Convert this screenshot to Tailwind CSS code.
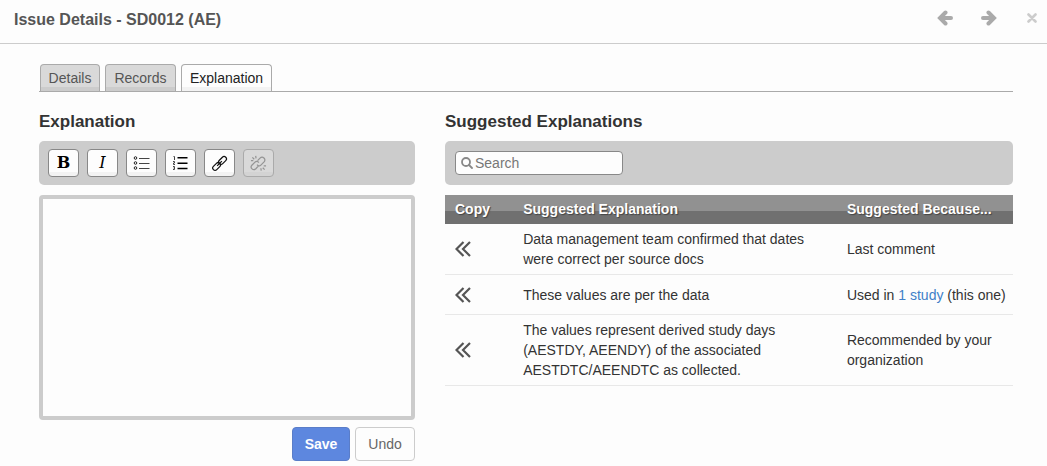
<!DOCTYPE html>
<html lang="en">
<head>
    <meta charset="UTF-8">
    <meta name="viewport" content="width=device-width, initial-scale=1.0">
    <title>Issue Details - SD0012 (AE)</title>
    <script src="https://cdn.jsdelivr.net/npm/@tailwindcss/browser@4"></script>
</head>
<body class="bg-[#fdfdfd] font-['Liberation_Sans',Arial,sans-serif] text-sm leading-5 text-[#333]">
    <!-- Header -->
    <header class="flex items-center justify-between border-b border-[#ccc] h-11 pl-[14px] pr-[10px] pb-1">
        <h1 class="text-base font-bold text-[#555]">Issue Details - SD0012 (AE)</h1>
        <div class="flex items-center pb-1">
            <button type="button" aria-label="Previous" class="mr-7">
                <svg class="block" width="16" height="16" viewBox="0 0 16 16" fill="none" stroke="#aaa" stroke-width="4" stroke-linecap="round"><path d="M8.500 2.500 3 8l5.500 5.500M4 8h10"/></svg>
            </button>
            <button type="button" aria-label="Next" class="mr-[30px]">
                <svg class="block" width="16" height="16" viewBox="0 0 16 16" fill="none" stroke="#aaa" stroke-width="4" stroke-linecap="round"><path d="M7.500 2.500 13 8l-5.500 5.500M12 8H2"/></svg>
            </button>
            <button type="button" aria-label="Close">
                <svg class="block" width="10" height="10" viewBox="0 0 10 10" fill="none" stroke="#ccc" stroke-width="2.600" stroke-linecap="round"><path d="M1.500 1.500l7 7M8.500 1.500l-7 7"/></svg>
            </button>
        </div>
    </header>

    <main class="pl-[39px] pr-[34px] pt-5 pb-1">
        <!-- Tabs -->
        <nav class="flex gap-[5px] border-b border-[#aaa] pl-px">
            <a href="#details" class="h-[27px] w-[60px] rounded-t border border-b-0 border-[#aaa] bg-linear-to-b from-[#d9d9d9] from-85% to-[#ccc] to-85% pt-[3px] text-center text-[#555]">Details</a>
            <a href="#records" class="h-[27px] w-[71px] rounded-t border border-b-0 border-[#aaa] bg-linear-to-b from-[#d9d9d9] from-85% to-[#ccc] to-85% pt-[3px] text-center text-[#555]">Records</a>
            <a href="#explanation" class="h-[27px] w-[91px] rounded-t border border-b-0 border-[#aaa] bg-linear-to-b from-[#fdfdfd] from-85% to-[#f3f3f3] to-85% pt-[3px] text-center text-[#222]">Explanation</a>
        </nav>

        <div class="grid grid-cols-[376fr_568fr] gap-[30px] pt-5">
            <!-- Explanation editor -->
            <section>
                <h2 class="mb-[9px] text-[17px] leading-5 font-bold"><label for="explanation-text">Explanation</label></h2>
                <div class="flex h-11 items-center gap-2 rounded-[5px] bg-[#ccc] pl-[9px]">
                    <button type="button" aria-label="Bold" class="h-7 w-[31px] rounded border border-[#888] bg-linear-to-b from-[#fdfdfd] from-85% to-[#f3f3f3] to-85% font-['DejaVu_Serif',serif] text-base font-bold text-black">B</button>
                    <button type="button" aria-label="Italic" class="h-7 w-[31px] rounded border border-[#888] bg-linear-to-b from-[#fdfdfd] from-85% to-[#f3f3f3] to-85% font-['DejaVu_Serif',serif] text-base text-black italic">I</button>
                    <button type="button" aria-label="Bulleted list" class="flex h-7 w-[31px] items-center justify-center rounded border border-[#888] bg-linear-to-b from-[#fdfdfd] from-85% to-[#f3f3f3] to-85%">
                        <svg width="17" height="16" viewBox="0 0 17 16" fill="none" stroke="#222"><circle cx="2.500" cy="3" r="1.300"/><circle cx="2.500" cy="8" r="1.300"/><circle cx="2.500" cy="13" r="1.300"/><path stroke="#444" d="M6 3.500h10.500M6 8.500h10.500M6 13.500h10.500"/></svg>
                    </button>
                    <button type="button" aria-label="Numbered list" class="flex h-7 w-[31px] items-center justify-center rounded border border-[#888] bg-linear-to-b from-[#fdfdfd] from-85% to-[#f3f3f3] to-85%">
                        <svg width="17" height="16" viewBox="0 0 17 16" fill="none" stroke="#444"><path d="M1.500 1.500h1V5M1 6.500h1.500v1.500H1.500v1.500H3M1 11.500h1.500v3H1M1.500 13h1"/><path stroke="#000" stroke-width="1.500" d="M5.500 2.800h10M5.500 8.200h10M5.500 13.500h10"/></svg>
                    </button>
                    <button type="button" aria-label="Insert link" class="flex h-7 w-[31px] items-center justify-center rounded border border-[#888] bg-linear-to-b from-[#fdfdfd] from-85% to-[#f3f3f3] to-85%">
                        <svg width="17" height="17" viewBox="0 0 18 18" fill="none" stroke="#111" stroke-width="1.300"><rect x="7.500" y="3.300" width="9.500" height="5" rx="2.500" transform="rotate(-45 12.200 5.800)"/><rect x="1.200" y="9.700" width="9.500" height="5" rx="2.500" transform="rotate(-45 5.900 12.200)"/><path d="M6.500 11.500l5-5"/></svg>
                    </button>
                    <button type="button" aria-label="Remove link" disabled class="flex h-7 w-[31px] items-center justify-center rounded border border-[#aaa] bg-linear-to-b from-[#d9d9d9] from-85% to-[#d3d3d3] to-85%">
                        <svg width="17" height="17" viewBox="0 0 18 18" fill="none" stroke="#949494" stroke-width="1.300"><path d="M8 6l2.600-2.700c2.700-2.700 7 1 4.300 4L11.500 10.700c-1.300 1.300-3 1-4-.5M9 11.500l-2.800 3c-2.700 2.600-6.700-.8-4.200-3.700L5.300 7.500c1.300-1.300 3-1 4 .5"/><path d="M6 1l.4 2.500M2.500 2.500l2 2M1 6h2.500M11.500 14l.4 2.500M13.500 13.500l2 2M14.500 11.500H17"/></svg>
                    </button>
                </div>
                <textarea id="explanation-text" class="mt-[10px] block h-[225px] w-full resize-none rounded border-4 border-[#ccc] bg-[#fdfdfd] p-1 outline-none"></textarea>
                <div class="mt-[7px] flex justify-end gap-[5px]">
                    <button type="button" class="h-[34px] w-[58px] rounded border border-[#5a7dc8] bg-[#5d87df] font-bold text-white">Save</button>
                    <button type="button" class="h-[34px] w-[60px] rounded border border-[#ccc] bg-[#fdfdfd] text-[#666]">Undo</button>
                </div>
            </section>

            <!-- Suggestions -->
            <section>
                <h2 class="mb-[9px] text-[17px] leading-5 font-bold">Suggested Explanations</h2>
                <div class="flex h-11 items-center rounded-[5px] bg-[#ccc] pl-[10px]">
                    <label class="flex h-6 w-[168px] items-center gap-[2px] rounded border border-[#888] bg-[#fdfdfd] pl-[5px]">
                        <svg class="shrink-0" width="12" height="12" viewBox="0 0 12 12" fill="none" stroke="#888" stroke-width="1.800" stroke-linecap="round"><circle cx="5" cy="5" r="4"/><path d="M8 8l3 3"/></svg>
                        <input type="text" aria-label="Search" placeholder="Search" class="w-full min-w-0 outline-none placeholder:text-[#777]">
                    </label>
                </div>
                <table class="mt-[10px] w-full table-fixed border-collapse text-left">
                    <colgroup>
                        <col class="w-[12%]">
                        <col>
                        <col class="w-[31%]">
                    </colgroup>
                    <thead>
                        <tr class="h-[29px] bg-linear-to-b from-[#919191] from-55% to-[#707070] to-55% text-white text-shadow-[1px_1px_1px_#444]">
                            <th class="pb-[2px] pl-[10px]">Copy</th>
                            <th class="pb-[2px] pl-[10px]">Suggested Explanation</th>
                            <th class="pb-[2px] pl-[10px]">Suggested Because...</th>
                        </tr>
                    </thead>
                    <tbody>
                        <tr class="border-b border-[#e8e8e8]">
                            <td class="pl-[10px]">
                                <button type="button" aria-label="Copy" class="block"><svg width="17" height="18" viewBox="0 0 17 18" fill="none" stroke="#555" stroke-width="2.200"><path d="M8.500 2 1.500 9l7 7M15 2 8 9l7 7"/></svg></button>
                            </td>
                            <td class="py-[5px] pl-[10px] pr-5">Data management team confirmed that dates were correct per source docs</td>
                            <td class="py-[5px] pl-[10px]">Last comment</td>
                        </tr>
                        <tr class="h-10 border-b border-[#e8e8e8]">
                            <td class="pl-[10px]">
                                <button type="button" aria-label="Copy" class="block"><svg width="17" height="18" viewBox="0 0 17 18" fill="none" stroke="#555" stroke-width="2.200"><path d="M8.500 2 1.500 9l7 7M15 2 8 9l7 7"/></svg></button>
                            </td>
                            <td class="py-[5px] pl-[10px] pr-5">These values are per the data</td>
                            <td class="py-[5px] pl-[10px]">Used in <a href="#study" class="text-[#4080c8]">1 study</a> (this one)</td>
                        </tr>
                        <tr class="border-b border-[#e8e8e8]">
                            <td class="pl-[10px]">
                                <button type="button" aria-label="Copy" class="block"><svg width="17" height="18" viewBox="0 0 17 18" fill="none" stroke="#555" stroke-width="2.200"><path d="M8.500 2 1.500 9l7 7M15 2 8 9l7 7"/></svg></button>
                            </td>
                            <td class="py-[5px] pl-[10px] pr-10">The values represent derived study days (AESTDY, AEENDY) of the associated AESTDTC/AEENDTC as collected.</td>
                            <td class="py-[5px] pl-[10px] pr-[10px]">Recommended by your organization</td>
                        </tr>
                    </tbody>
                </table>
            </section>
        </div>
    </main>
</body>
</html>
